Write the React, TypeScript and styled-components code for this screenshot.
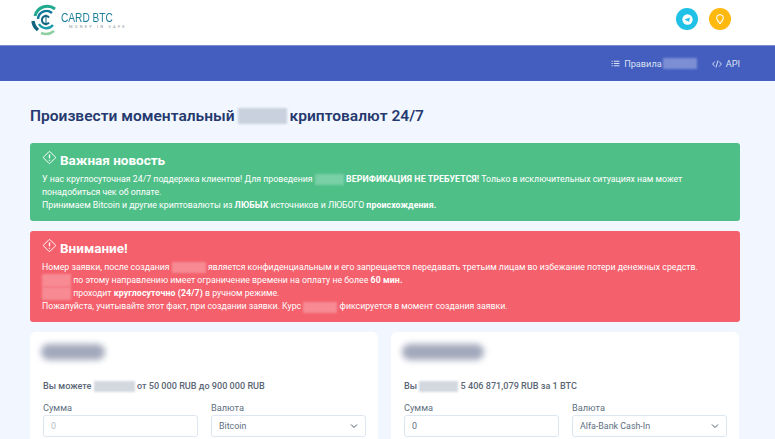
import React from 'react';
import styled, { createGlobalStyle } from 'styled-components';

const GlobalStyle = createGlobalStyle`
  html, body {
    margin: 0;
    padding: 0;
    height: 100%;
    overflow: hidden;
    background: #f2f7ff;
    font-family: Roboto, "Noto Sans", sans-serif;
    color: #607080;
  }
  * { box-sizing: border-box; }
`;

const Page = styled.div`
  width: 775px;
  height: 439px;
  overflow: hidden;
`;

const Header = styled.header`
  height: 45px;
  background: #fff;
  display: flex;
  align-items: flex-start;
  justify-content: space-between;
  padding: 4px 44px 0 30px;
`;

const Logo = styled.div`
  display: flex;
  align-items: center;
`;

const LogoText = styled.div`
  display: flex;
  flex-direction: column;
  margin-left: -1px;
`;

const LogoTitle = styled.span`
  font-family: "Liberation Sans", sans-serif;
  font-size: 13px;
  line-height: 13px;
  color: #1d7f9c;
  white-space: nowrap;
  transform: scaleX(0.78);
  transform-origin: left;
`;

const LogoSub = styled.span`
  font-size: 4px;
  line-height: 5px;
  letter-spacing: 2.2px;
  color: #8a96a0;
  margin-left: 8px;
  white-space: nowrap;
`;

const RoundButtons = styled.div`
  display: flex;
  gap: 11px;
  padding-top: 4px;
`;

const RoundButton = styled.div<{ $bg: string }>`
  width: 22px;
  height: 22px;
  border-radius: 50%;
  background: ${p => p.$bg};
  display: flex;
  align-items: center;
  justify-content: center;
`;

const Nav = styled.nav`
  height: 36px;
  background: #435ebe;
  border-top: 1px solid #7f8fc9;
  display: flex;
  align-items: center;
  justify-content: flex-end;
  padding-right: 35px;
  gap: 15px;
  color: #dbe1f3;
  font-size: 9.2px;
`;

const NavItem = styled.div`
  display: flex;
  align-items: center;
  gap: 4px;
`;

const NavLabel = styled.span`
  display: flex;
  align-items: center;
  gap: 1px;
`;

const Blur = styled.span<{ $w: number; $h?: number; $bg: string }>`
  display: inline-block;
  width: ${p => p.$w}px;
  height: ${p => p.$h ?? 11}px;
  background: ${p => p.$bg};
  vertical-align: middle;
  filter: blur(1px);
`;

const Content = styled.main`
  padding: 24px 35px 0 30px;
`;

const Title = styled.h1`
  margin: 0 0 16px;
  font-size: 15.55px;
  line-height: 22px;
  font-weight: 600;
  color: #25396f;
  display: flex;
  align-items: center;
  gap: 3px;
  white-space: nowrap;
`;

const Alert = styled.section<{ $bg: string; $h: number }>`
  background: ${p => p.$bg};
  color: #fff;
  border-radius: 3px;
  height: ${p => p.$h}px;
  padding: 7px 12px;
  margin-bottom: 10px;
  font-size: 8.75px;
  line-height: 13px;
  white-space: nowrap;
`;

const AlertTitle = styled.div`
  display: flex;
  align-items: center;
  gap: 3px;
  font-size: 13.5px;
  line-height: 20px;
  font-weight: 700;
  margin-bottom: 3px;
`;

const AlertIcon = styled.svg`
  margin-top: -5px;
`;

const Strong = styled.b`
  letter-spacing: 0.1px;
`;

const Columns = styled.div`
  display: grid;
  grid-template-columns: 348px 348px;
  gap: 13px;
`;

const Card = styled.section`
  background: #fff;
  border-radius: 6px;
  height: 140px;
  padding: 12px 13px;
`;

const CardTitle = styled.div<{ $w: number }>`
  width: ${p => p.$w}px;
  height: 16px;
  margin-left: -2px;
  border-radius: 8px;
  background: #a3a9bc;
  filter: blur(3px);
  margin-bottom: 20px;
`;

const Note = styled.div`
  font-size: 9.1px;
  line-height: 12px;
  font-weight: 500;
  color: #5a6675;
  margin: 0 0 10px;
  white-space: nowrap;
`;

const Fields = styled.div`
  display: grid;
  grid-template-columns: 155px 155px;
  gap: 13px;
`;

const Field = styled.div`
  display: flex;
  flex-direction: column;
`;

const Label = styled.label`
  font-size: 9.2px;
  line-height: 12px;
  color: #607080;
  margin-bottom: 1px;
`;

const Control = styled.div<{ $muted?: boolean }>`
  height: 22px;
  border: 1px solid #dce7f1;
  border-radius: 3px;
  display: flex;
  align-items: center;
  justify-content: space-between;
  padding: 0 7px;
  font-size: 8.9px;
  color: ${p => (p.$muted ? '#b4bcc5' : '#607080')};
  background: #fff;
`;

const InfoIcon = () => (
  <AlertIcon width="15" height="15" viewBox="0 0 16 16" fill="none" stroke="#fff" strokeWidth="1">
    <rect x="3.2" y="3.2" width="9.6" height="9.6" rx="1" transform="rotate(45 8 8)" />
    <path d="M8 4.8v4M8 10.4v1" strokeWidth="1.4" />
  </AlertIcon>
);

const Chevron = () => (
  <svg width="8" height="8" viewBox="0 0 16 16" fill="none" stroke="#4a5563" strokeWidth="2">
    <path d="M2 5l6 6 6-6" />
  </svg>
);

const App = () => (
  <Page>
    <GlobalStyle />
    <Header>
      <Logo>
        <svg width="32" height="32" viewBox="0 0 32 32" fill="none">
          <path d="M5 12A12.5 12.5 0 0 1 25 5" stroke="#1fa98e" strokeWidth="3" />
          <path d="M3 17a13 13 0 0 0 5 9" stroke="#12647f" strokeWidth="3.4" />
          <path d="M11 29a13 13 0 0 0 13-2" stroke="#8fd0a0" strokeWidth="2.6" />
          <path d="M8 15a8.5 8.5 0 0 1 14-6" stroke="#10789a" strokeWidth="2.4" />
          <path d="M9 20a8.5 8.5 0 0 0 14 1" stroke="#1a9aa8" strokeWidth="2.4" />
          <path d="M19 13.5a4 4 0 1 0 0 5" stroke="#12647f" strokeWidth="2" />
          <path d="M16 10.5v11" stroke="#12647f" strokeWidth="1" />
        </svg>
        <LogoText>
          <LogoTitle>CARD BTC</LogoTitle>
          <LogoSub>MONEY IN SAFE</LogoSub>
        </LogoText>
      </Logo>
      <RoundButtons>
        <RoundButton $bg="#1fc1e6">
          <svg width="11" height="11" viewBox="0 0 16 16" fill="#fff">
            <circle cx="8" cy="8" r="7.5" />
            <path d="M3.5 8l8-3-1.2 6.5-2.4-1.7-1.2 1.2-.3-2z" fill="#1fc1e6" />
          </svg>
        </RoundButton>
        <RoundButton $bg="#ffb90f">
          <svg width="12" height="12" viewBox="0 0 16 16" fill="none" stroke="#fff" strokeWidth="1.4">
            <path d="M5.5 10.5C4.5 9.6 3.6 8.4 3.6 6.6a4.4 4.4 0 0 1 8.8 0c0 1.8-.9 3-1.9 3.9v1.5h-5zM6.5 14h3" />
          </svg>
        </RoundButton>
      </RoundButtons>
    </Header>
    <Nav>
      <NavItem>
        <svg width="9" height="9" viewBox="0 0 16 16" fill="#dbe1f3">
          <path d="M1 3h2v2H1zM5 3h10v2H5zM1 7h2v2H1zM5 7h10v2H5zM1 11h2v2H1zM5 11h10v2H5z" />
        </svg>
        <NavLabel>
          Правила
          <Blur $w={34} $h={11} $bg="#7c8fd4" />
        </NavLabel>
      </NavItem>
      <NavItem>
        <svg width="10" height="10" viewBox="0 0 16 16" fill="none" stroke="#dbe1f3" strokeWidth="1.5">
          <path d="M4.5 4L1 8l3.5 4M11.5 4L15 8l-3.5 4M9.5 2.5l-3 11" />
        </svg>
        <span>API</span>
      </NavItem>
    </Nav>
    <Content>
      <Title>
        Произвести моментальный <Blur $w={49} $h={16} $bg="#c9d1de" /> криптовалют 24/7
      </Title>
      <Alert $bg="#4fbf88" $h={78}>
        <AlertTitle>
          <InfoIcon />
          Важная новость
        </AlertTitle>
        <div>
          У нас круглосуточная 24/7 поддержка клиентов! Для проведения <Blur $w={29} $bg="#79cfa6" />{' '}
          <Strong>ВЕРИФИКАЦИЯ НЕ ТРЕБУЕТСЯ!</Strong> Только в исключительных ситуациях нам может
        </div>
        <div>понадобиться чек об оплате.</div>
        <div>
          Принимаем Bitcoin и другие криптовалюты из <Strong>ЛЮБЫХ</Strong> источников и ЛЮБОГО{' '}
          <Strong>происхождения.</Strong>
        </div>
      </Alert>
      <Alert $bg="#f4606c" $h={91}>
        <AlertTitle>
          <InfoIcon />
          Внимание!
        </AlertTitle>
        <div>
          Номер заявки, после создания <Blur $w={34} $bg="#f78a93" /> является конфиденциальным и его запрещается
          передавать третьим лицам во избежание потери денежных средств.
        </div>
        <div>
          <Blur $w={29} $h={13} $bg="#f78a93" /> по этому направлению имеет ограничение времени на оплату не более{' '}
          <Strong>60 мин.</Strong>
        </div>
        <div>
          <Blur $w={29} $h={13} $bg="#f78a93" /> проходит <Strong>круглосуточно (24/7)</Strong> в ручном режиме.
        </div>
        <div>
          Пожалуйста, учитывайте этот факт, при создании заявки. Курс <Blur $w={34} $bg="#f78a93" /> фиксируется в
          момент создания заявки.
        </div>
      </Alert>
      <Columns>
        <Card>
          <CardTitle $w={64} />
          <Note>
            Вы можете <Blur $w={41} $bg="#d3d8df" /> от 50 000 RUB до 900 000 RUB
          </Note>
          <Fields>
            <Field>
              <Label>Сумма</Label>
              <Control $muted>0</Control>
            </Field>
            <Field>
              <Label>Валюта</Label>
              <Control>
                Bitcoin
                <Chevron />
              </Control>
            </Field>
          </Fields>
        </Card>
        <Card>
          <CardTitle $w={82} />
          <Note>
            Вы <Blur $w={39} $bg="#d3d8df" /> 5 406 871,079 RUB за 1 BTC
          </Note>
          <Fields>
            <Field>
              <Label>Сумма</Label>
              <Control>0</Control>
            </Field>
            <Field>
              <Label>Валюта</Label>
              <Control>
                Alfa-Bank Cash-In
                <Chevron />
              </Control>
            </Field>
          </Fields>
        </Card>
      </Columns>
    </Content>
  </Page>
);

export default App;
